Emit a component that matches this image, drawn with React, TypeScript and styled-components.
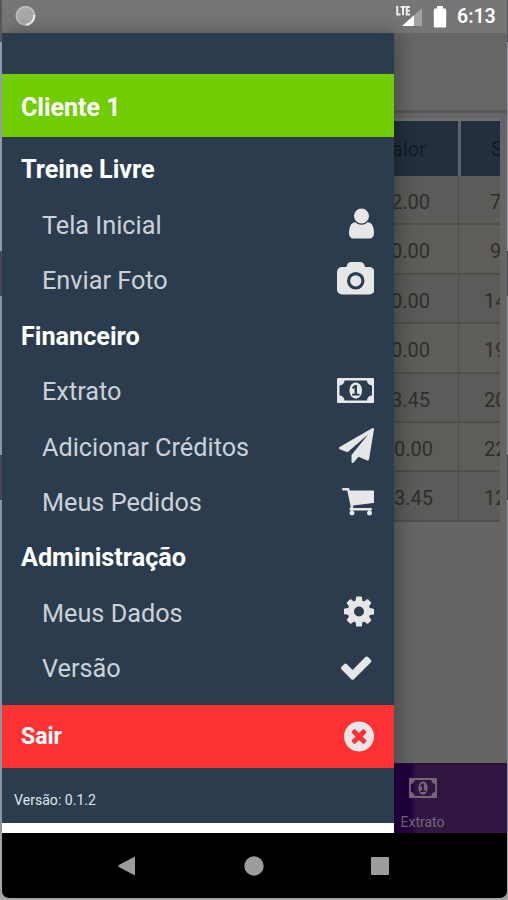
import React from "react";
import styled, { createGlobalStyle } from "styled-components";

const GlobalStyle = createGlobalStyle`
  * { box-sizing: border-box; }
  body { margin: 0; background: #8c8c90; font-family: Roboto, "Liberation Sans", sans-serif; }
`;

const Frame = styled.div`
  width: 508px;
  height: 900px;
  padding: 0 1px 2px 2px;
  overflow: hidden;
  background: linear-gradient(
    #55555f 0 42px, #9399a5 42px 251px, #4a4656 251px 296px,
    #8b959e 296px 455px, #4a4656 455px 500px, #8b959e 500px 832px, #a5a5a5 832px
  );
`;

const Device = styled.div`
  display: flex;
  flex-direction: column;
  height: 898px;
  border-radius: 0 0 7px 7px;
  overflow: hidden;
  background: #000;
`;

const StatusBar = styled.header`
  display: flex;
  align-items: center;
  justify-content: space-between;
  height: 33px;
  padding: 0 11px 0 13px;
  background: #767676;
`;

const StatusGroup = styled.div`
  display: flex;
  align-items: center;
  svg { display: block; }
`;

const Battery = styled.svg`
  margin-left: 10px;
`;

const Clock = styled.span`
  width: 39px;
  margin-left: 10px;
  font-size: 19.5px;
  font-weight: 600;
  line-height: 35px;
  white-space: nowrap;
  color: #fff;
`;

const AppArea = styled.div`
  position: relative;
  height: 800px;
  background: #666;
`;

const Page = styled.div`
  display: flex;
  flex-direction: column;
  height: 100%;
`;

const TitleBar = styled.div`
  height: 80px;
  border-bottom: 3px solid #575757;
  background: #666;
`;

const Content = styled.main`
  flex: 1;
  padding: 5px 7px 0 392px;
  overflow: hidden;
  background: #656565;
`;

const Table = styled.div`
  overflow: hidden;
  border-top: 3px solid #6e6e6e;
`;

const TableRow = styled.div<{ $tone: string; $head?: boolean }>`
  display: grid;
  grid-template-columns: ${(p) => (p.$head ? "67px 39px" : "65px 41px")};
  height: ${(p) => (p.$head ? "55px" : "49.4px")};
  background: ${(p) => p.$tone};
  border-bottom: ${(p) => (p.$head ? "none" : "2px solid #504f4b")};
  color: ${(p) => (p.$head ? "#111a22" : "#302f2c")};
  font-size: 20px;
  line-height: ${(p) => (p.$head ? "56px" : "53px")};
`;

const Cell = styled.div<{ $inset: number; $rule?: string }>`
  padding-left: ${(p) => p.$inset}px;
  overflow: hidden;
  white-space: nowrap;
  border-right: ${(p) => (p.$rule ? p.$rule : "none")};
`;

const Shift = styled.span<{ $x: number }>`
  margin-left: ${(p) => p.$x}px;
`;

const TabBar = styled.footer`
  display: flex;
  justify-content: flex-end;
  height: 70px;
  border-top: 1px solid #26102f;
  background: linear-gradient(90deg, #24003f 0 409px, #321641 414px);
`;

const Tab = styled.div`
  display: flex;
  flex-direction: column;
  align-items: center;
  width: 169px;
  padding: 14px 0 0;
  color: #736778;
  font-size: 14px;
  svg { display: block; }
  span { line-height: 16px; margin-top: 16px; }
`;

const Drawer = styled.aside`
  position: absolute;
  top: 0;
  left: 0;
  display: flex;
  flex-direction: column;
  width: 392px;
  height: 800px;
  background: #2c3c4f;
  box-shadow: 2px 0 20px rgba(0, 0, 0, 0.35);
  border-bottom: 10px solid #fff;
`;

const DrawerTop = styled.div`
  flex: none;
  height: 41.4px;
`;

const Banner = styled.div<{ $color: string; $size: number; $line: number }>`
  flex: none;
  display: flex;
  align-items: center;
  justify-content: space-between;
  height: 63px;
  padding: 0 20px 0 19px;
  background: ${(p) => p.$color};
  color: #fff;
  font-size: ${(p) => p.$size}px;
  font-weight: 700;
  line-height: ${(p) => p.$line}px;
`;

const BannerLabel = styled.span<{ $drop: number }>`
  padding-top: ${(p) => p.$drop}px;
`;

const Menu = styled.nav`
  flex: none;
  height: 567.6px;
  padding-top: 5px;
`;

const Section = styled.div`
  height: 55.4px;
  padding-left: 19px;
  font-size: 25.2px;
  font-weight: 700;
  line-height: 56px;
  color: #fff;
`;

const Item = styled.div`
  display: flex;
  align-items: center;
  justify-content: space-between;
  height: 55.4px;
  padding: 0 20px 0 40px;
  font-size: 25.25px;
  line-height: 57px;
  color: #ccd1d7;
`;

const Glyph = styled.svg<{ $nudge?: number; $up?: number }>`
  display: block;
  fill: #e7e7e8;
  margin-right: ${(p) => p.$nudge ?? 0}px;
  margin-bottom: ${(p) => p.$up ?? 0}px;
`;

const VersionNote = styled.div`
  flex: none;
  padding: 5px 0 0 12px;
  height: 54px;
  font-size: 14.1px;
  line-height: 54px;
  color: #dfe4ea;
`;

const SystemNav = styled.div`
  display: flex;
  justify-content: center;
  align-items: center;
  gap: 107.5px;
  height: 65px;
  padding-right: 2px;
  svg { display: block; fill: #9c9c9c; }
`;

type IconShape = { x: number; w: number; d: string };

const icons: Record<string, IconShape> = {
  user: { x: 256, w: 1280, d: "M1536 1399q0 109-62.5 187t-150.5 78h-854q-88 0-150.5-78t-62.5-187q0-85 8.5-160.5t31.5-152 58.5-131 94-89 134.5-34.5q131 128 313 128t313-128q76 0 134.5 34.5t94 89 58.5 131 31.5 152 8.5 160.5zm-256-887q0 159-112.5 271.5t-271.5 112.5-271.5-112.5-112.5-271.5 112.5-271.5 271.5-112.5 271.5 112.5 112.5 271.5z" },
  camera: { x: -64, w: 1920, d: "M896 672q119 0 203.5 84.5t84.5 203.5-84.5 203.5-203.5 84.5-203.5-84.5-84.5-203.5 84.5-203.5 203.5-84.5zm704-416q106 0 181 75t75 181v896q0 106-75 181t-181 75h-1408q-106 0-181-75t-75-181v-896q0-106 75-181t181-75h224l51-136q19-49 69.5-84.5t103.5-35.5h512q53 0 103.5 35.5t69.5 84.5l51 136h224zm-704 1152q185 0 316.5-131.5t131.5-316.5-131.5-316.5-316.5-131.5-316.5 131.5-131.5 316.5 131.5 316.5 316.5 131.5z" },
  money: { x: 0, w: 1920, d: "M768 1152h384v-96h-128v-448h-114l-148 137 77 80q42-37 55-57h2v288h-128v96zm512-256q0 70-21 142t-59.5 134-101.5 101-138 39-138-39-101.5-101-59.5-134-21-142 21-142 59.5-134 101.5-101 138-39 138 39 101.5 101 59.5 134 21 142zm512 256v-512q-106 0-181-75t-75-181h-1152q0 106-75 181t-181 75v512q106 0 181 75t75 181h1152q0-106 75-181t181-75zm128-832v1152q0 26-19 45t-45 19h-1792q-26 0-45-19t-19-45v-1152q0-26 19-45t45-19h1792q26 0 45 19t19 45z" },
  plane: { x: 0, w: 1792, d: "M1764 11q33 24 27 64l-256 1536q-5 29-32 45-14 8-31 8-11 0-24-5l-453-185-242 295q-18 23-49 23-13 0-22-4-19-7-30.5-23.5t-11.5-36.5v-349l864-1059-1069 925-395-162q-37-14-40-55-2-40 32-59l1664-960q15-9 32-9 20 0 36 11z" },
  cart: { x: 64, w: 1664, d: "M704 1536q0 52-38 90t-90 38-90-38-38-90 38-90 90-38 90 38 38 90zm896 0q0 52-38 90t-90 38-90-38-38-90 38-90 90-38 90 38 38 90zm128-1088v512q0 24-16.5 42.5t-40.5 21.5l-1044 122q13 60 13 70 0 16-24 64h920q26 0 45 19t19 45-19 45-45 19h-1024q-26 0-45-19t-19-45q0-11 8-31.5t16-36 21.5-40 15.5-29.5l-177-823h-204q-26 0-45-19t-19-45 19-45 45-19h256q16 0 28.5 6.5t19.5 15.5 13 24.5 8 26 5.5 29.5 4.5 26h1201q26 0 45 19t19 45z" },
  cog: { x: 128, w: 1536, d: "M1152 896q0-106-75-181t-181-75-181 75-75 181 75 181 181 75 181-75 75-181zm512-109v222q0 12-8 23t-20 13l-185 28q-19 54-39 91 35 50 107 138 10 12 10 25t-9 23q-27 37-99 108t-94 71q-12 0-26-9l-138-108q-44 23-91 38-16 136-29 186-7 28-36 28h-222q-14 0-24.5-8.5t-11.5-21.5l-28-184q-49-16-90-37l-141 107q-10 9-25 9-14 0-25-11-126-114-165-168-7-10-7-23 0-12 8-23 15-21 51-66.5t54-70.5q-27-50-41-99l-183-27q-13-2-21-12.5t-8-23.5v-222q0-12 8-23t19-13l186-28q14-46 39-92-40-57-107-138-10-12-10-24 0-10 9-23 26-36 98.5-107.5t94.5-71.5q13 0 26 10l138 107q44-23 91-38 16-136 29-186 7-28 36-28h222q14 0 24.5 8.5t11.5 21.5l28 184q49 16 90 37l142-107q9-9 24-9 13 0 25 10 129 119 165 170 7 8 7 22 0 12-8 23-15 21-51 66.5t-54 70.5q26 50 41 98l183 28q13 2 21 12.5t8 23.5z" },
  check: { x: 121, w: 1550, d: "M1671 566q0 40-28 68l-724 724-136 136q-28 28-68 28t-68-28l-136-136-362-362q-28-28-28-68t28-68l136-136q28-28 68-28t68 28l294 295 656-657q28-28 68-28t68 28l136 136q28 28 28 68z" },
  close: { x: 128, w: 1536, d: "M1277 1122q0-26-19-45l-181-181 181-181q19-19 19-45 0-27-19-46l-90-90q-19-19-46-19-26 0-45 19l-181 181-181-181q-19-19-45-19-27 0-46 19l-90 90q-19 19-19 46 0 26 19 45l181 181-181 181q-19 19-19 45 0 27 19 46l90 90q19 19 46 19 26 0 45-19l181-181 181 181q19 19 45 19 27 0 46-19l90-90q19-19 19-46zm387-226q0 209-103 385.5t-279.5 279.5-385.5 103-385.5-103-279.5-279.5-103-385.5 103-385.5 279.5-279.5 385.5-103 385.5 103 279.5 279.5 103 385.5z" },
};

const Icon = ({ name, nudge, up = 3 }: { name: string; nudge?: number; up?: number }) => {
  const { x, w, d } = icons[name];
  const scale = 35 / 1792;
  return (
    <Glyph $nudge={nudge} $up={up} width={w * scale} height={35} viewBox={`${x} 0 ${w} 1792`}>
      <path d={d} />
    </Glyph>
  );
};

const menu = [
  { title: "Treine Livre", items: [["Tela Inicial", "user"], ["Enviar Foto", "camera"]] },
  { title: "Financeiro", items: [["Extrato", "money"], ["Adicionar Créditos", "plane"], ["Meus Pedidos", "cart"]] },
  { title: "Administração", items: [["Meus Dados", "cog"], ["Versão", "check"]] },
];

const rows: [string, string, number, number][] = [
  ["2.00", "7", -3, 31],
  ["0.00", "9", -3, 31],
  ["0.00", "14", -3, 25],
  ["0.00", "19", -3, 25],
  ["3.45", "20", -3, 25],
  ["0.00", "22", 0, 25],
  ["3.45", "12", 0, 25],
];

export default function App() {
  return (
    <>
      <GlobalStyle />
      <Frame>
        <Device>
          <StatusBar>
            <StatusGroup>
              <svg width="22" height="22" viewBox="0 0 22 22">
                <circle cx="10.5" cy="9.8" r="9" fill="#a9a9a9" stroke="#bdbdbd" strokeWidth="2" />
                <path d="M19.2 9A9 9 0 0 1 11 18.9" fill="none" stroke="#f1f1f1" strokeWidth="2.2" />
              </svg>
            </StatusGroup>
            <StatusGroup>
              <svg width="27" height="22" viewBox="0 0 27 22">
                <path d="M6 20 26 2v18Z" fill="#a2a2a2" />
                <path d="M6 20 18 9.2V20Z" fill="#fff" />
                <path d="M1.2 0v8.5h3.3M4.6 1h4.8M7 1v8.2M14 1h-3.3v7.5H14M10.7 4.8h3" fill="none" stroke="#efefef" strokeWidth="2" />
              </svg>
              <Battery width="14" height="22" viewBox="0 0 14 22">
                <path d="M4 0h6v2.5h2q1.200 0 1.200 1.300V20q0 1.500-1.300 1.500H2Q.8 21.500.8 20V3.800Q.8 2.500 2 2.500H4Z" fill="#fff" />
              </Battery>
              <Clock>6:13</Clock>
            </StatusGroup>
          </StatusBar>
          <AppArea>
            <Page>
              <TitleBar />
              <Content>
                <Table>
                  <TableRow $head $tone="#232f3d">
                    <Cell $inset={0} $rule="3px solid #606468"><Shift $x={-2}>alor</Shift></Cell>
                    <Cell $inset={30}>S</Cell>
                  </TableRow>
                  {rows.map(([value, balance, shift, inset], i) => (
                    <TableRow key={i} $tone={i % 2 ? "#5f5d58" : "#5b5b59"}>
                      <Cell $inset={0} $rule="1px solid #4d4c48"><Shift $x={shift}>{value}</Shift></Cell>
                      <Cell $inset={inset}>{balance}</Cell>
                    </TableRow>
                  ))}
                </Table>
              </Content>
              <TabBar>
                <Tab>
                  <svg width="28" height="20" viewBox="0 256 1920 1280" preserveAspectRatio="none" fill="#736778">
                    <path d={icons.money.d} />
                  </svg>
                  <span>Extrato</span>
                </Tab>
              </TabBar>
            </Page>
            <Drawer>
              <DrawerTop />
              <Banner $color="#70cd04" $size={25} $line={60}>
                <BannerLabel $drop={4}>Cliente 1</BannerLabel>
              </Banner>
              <Menu>
                {menu.map((group) => (
                  <React.Fragment key={group.title}>
                    <Section>{group.title}</Section>
                    {group.items.map(([label, icon]) => (
                      <Item key={label}>
                        {label}
                        <Icon name={icon} nudge={icon === "check" ? 2.5 : 0} />
                      </Item>
                    ))}
                  </React.Fragment>
                ))}
              </Menu>
              <Banner $color="#ff3233" $size={23} $line={63}>
                <BannerLabel $drop={0}>Sair</BannerLabel>
                <Icon name="close" up={0} />
              </Banner>
              <VersionNote>Versão: 0.1.2</VersionNote>
            </Drawer>
          </AppArea>
          <SystemNav>
            <svg width="18" height="20" viewBox="0 0 18 20"><path d="M17 .5v19L.8 11q-1-1 0-2Z" /></svg>
            <svg width="20" height="20" viewBox="0 0 20 20"><circle cx="10" cy="10" r="9.7" /></svg>
            <svg width="18" height="18" viewBox="0 0 18 18"><rect width="18" height="18" rx="1" /></svg>
          </SystemNav>
        </Device>
      </Frame>
    </>
  );
}
